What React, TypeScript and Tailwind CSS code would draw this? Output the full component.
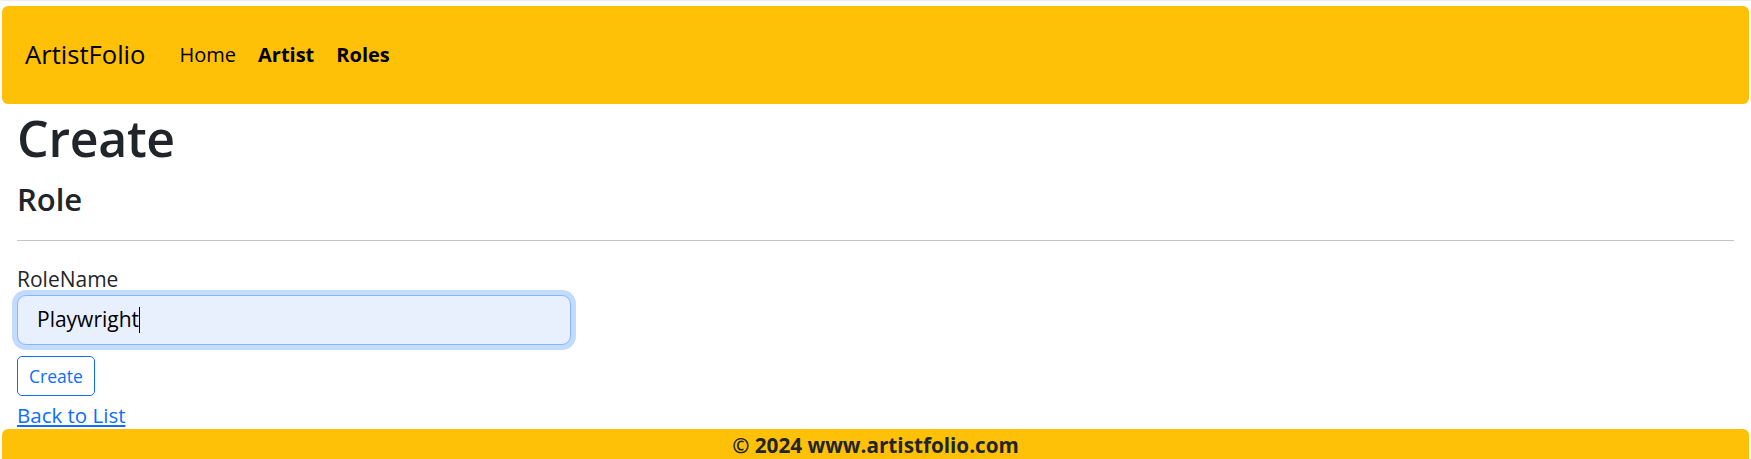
import React from "react";

export default function App() {
  const font = { fontFamily: '"Open Sans", "Noto Sans", sans-serif' };
  return (
    <div className="h-[459px] overflow-hidden bg-white text-[#212529]" style={font}>
      <div className="h-[1px] bg-[#ececec]" />
      <div className="pt-[5px] px-[2px]">
        <nav className="h-[98px] rounded-[6px] bg-[#ffc107] flex items-center pl-[23px] text-black">
          <span className="text-[25.6px] leading-none mr-[34px]">ArtistFolio</span>
          <div className="flex items-center gap-[22px] text-[20px] leading-none">
            <span>Home</span>
            <span className="font-bold">Artist</span>
            <span className="font-bold">Roles</span>
          </div>
        </nav>
      </div>
      <main className="px-[17px]">
        <h1 className="text-[50px] leading-[64px] font-semibold mt-[2px] tracking-[-0.3px]">Create</h1>
        <h4 className="text-[31px] leading-[40px] font-semibold mt-[9px]">Role</h4>
        <hr className="mt-[21px] border-t border-[#c4c4c4]" />
        <div className="mt-[25px] text-[21px] leading-[26px]">RoleName</div>
        <div className="mt-[3px] w-[554px] h-[50px] rounded-[9px] border border-[#86b7fe] bg-[#e8f0fe] shadow-[0_0_0_5px_#c2dbfe] flex items-center pl-[19px] text-[21px] text-black">
          <span>Playwright</span>
          <span className="inline-block w-[1px] h-[26px] bg-black" />
        </div>
        <button className="mt-[11px] h-[40px] w-[78px] rounded-[5px] border border-[#0d6efd] text-[#0d6efd] text-[17.5px] flex items-center justify-center">
          Create
        </button>
        <a href="#" className="block mt-[6px] text-[20.5px] leading-[26px] text-[#0d6efd] underline w-fit">
          Back to List
        </a>
      </main>
      <footer className="mx-[2px] mt-[1px] h-[40px] rounded-t-[6px] bg-[#ffc107] flex justify-center pt-[5px]">
        <span className="text-[20.7px] leading-[22px] font-bold text-[#212529]">© 2024 www.artistfolio.com</span>
      </footer>
    </div>
  );
}
